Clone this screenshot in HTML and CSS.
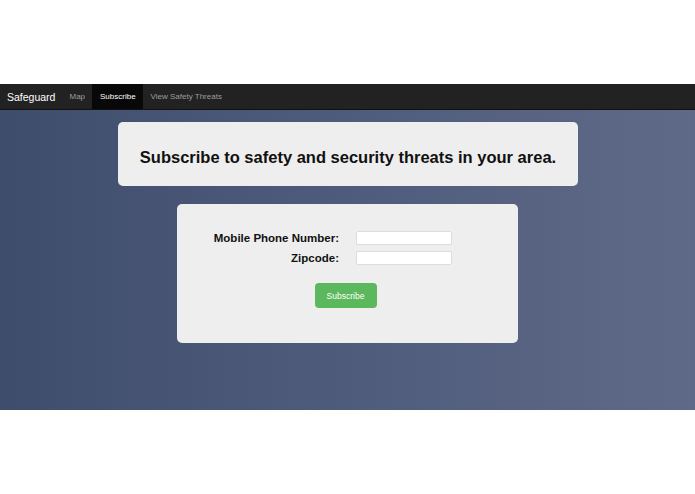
FILE: index.html
```html
<!DOCTYPE html>
<html lang="en">
<head>
    <meta charset="UTF-8">
    <meta name="viewport" content="width=device-width, initial-scale=1.0">
    <title>Safeguard - Subscribe</title>
    <link rel="stylesheet" href="styles.css">
</head>
<body>

    <div class="top-space"></div>

    <nav class="navbar">
        <a class="brand" href="#">Safeguard</a>
        <ul class="nav-links">
            <li><a href="#">Map</a></li>
            <li class="active"><a href="#">Subscribe</a></li>
            <li><a href="#">View Safety Threats</a></li>
        </ul>
    </nav>

    <div class="main">
        <div class="banner">
            <h1>Subscribe to safety and security threats in your area.</h1>
        </div>

        <form class="subscribe-form" onsubmit="return false;">
            <div class="form-row">
                <label for="phone">Mobile Phone Number:</label>
                <input type="text" id="phone" class="text-input">
            </div>
            <div class="form-row">
                <label for="zipcode">Zipcode:</label>
                <input type="text" id="zipcode" class="text-input">
            </div>
            <button type="submit" class="subscribe-button">Subscribe</button>
        </form>
    </div>

</body>
</html>
```

FILE: styles.css
```css
body {
    font-family: "Liberation Sans", Arial, sans-serif;
    margin: 0;
    padding: 0;
    background-color: #fff;
}
.top-space {
    height: 84px;
}
.navbar {
    display: flex;
    align-items: stretch;
    height: 25px;
    background-color: #222;
    border-bottom: 1px solid #111;
}
.brand {
    display: flex;
    align-items: center;
    padding: 0 6px 0 7px;
    color: #fff;
    font-size: 10.5px;
    text-decoration: none;
}
.nav-links {
    display: flex;
    list-style: none;
    margin: 0;
    padding: 0;
}
.nav-links li {
    display: flex;
}
.nav-links a {
    display: flex;
    align-items: center;
    padding: 0 7px 0 8px;
    color: #9d9d9d;
    font-size: 8px;
    text-decoration: none;
}
.nav-links li.active a {
    background-color: #080808;
    color: #fff;
}
.main {
    display: flex;
    flex-direction: column;
    align-items: center;
    height: 300px;
    padding-top: 12px;
    box-sizing: border-box;
    background: linear-gradient(to right, #3f4d6d, #5f6a88);
}
.banner {
    width: 460px;
    height: 64px;
    margin-left: 1px;
    display: flex;
    align-items: center;
    justify-content: center;
    background-color: #eee;
    border-radius: 5px;
}
.banner h1 {
    margin: 0;
    padding-top: 6px;
    font-size: 16.5px;
    color: #111;
}
.subscribe-form {
    width: 341px;
    height: 139px;
    margin-top: 18px;
    box-sizing: border-box;
    padding-top: 26px;
    display: flex;
    flex-direction: column;
    align-items: stretch;
    background-color: #eee;
    border-radius: 5px;
}
.form-row {
    display: flex;
    align-items: center;
    height: 15px;
    margin-bottom: 5px;
}
.form-row label {
    display: block;
    width: 162px;
    text-align: right;
    margin-right: 17px;
    font-size: 11.5px;
    font-weight: bold;
    color: #111;
}
.text-input {
    width: 94px;
    height: 12px;
    padding: 0;
    border: 1px solid #ddd;
    border-radius: 2px;
    background-color: #fff;
}
.subscribe-button {
    align-self: center;
    margin-top: 13px;
    margin-right: 4px;
    width: 62px;
    height: 25px;
    border: none;
    border-radius: 4px;
    background-color: #5cb85c;
    color: #fff;
    font-family: "Liberation Sans", Arial, sans-serif;
    font-size: 8.5px;
    cursor: pointer;
}
```
